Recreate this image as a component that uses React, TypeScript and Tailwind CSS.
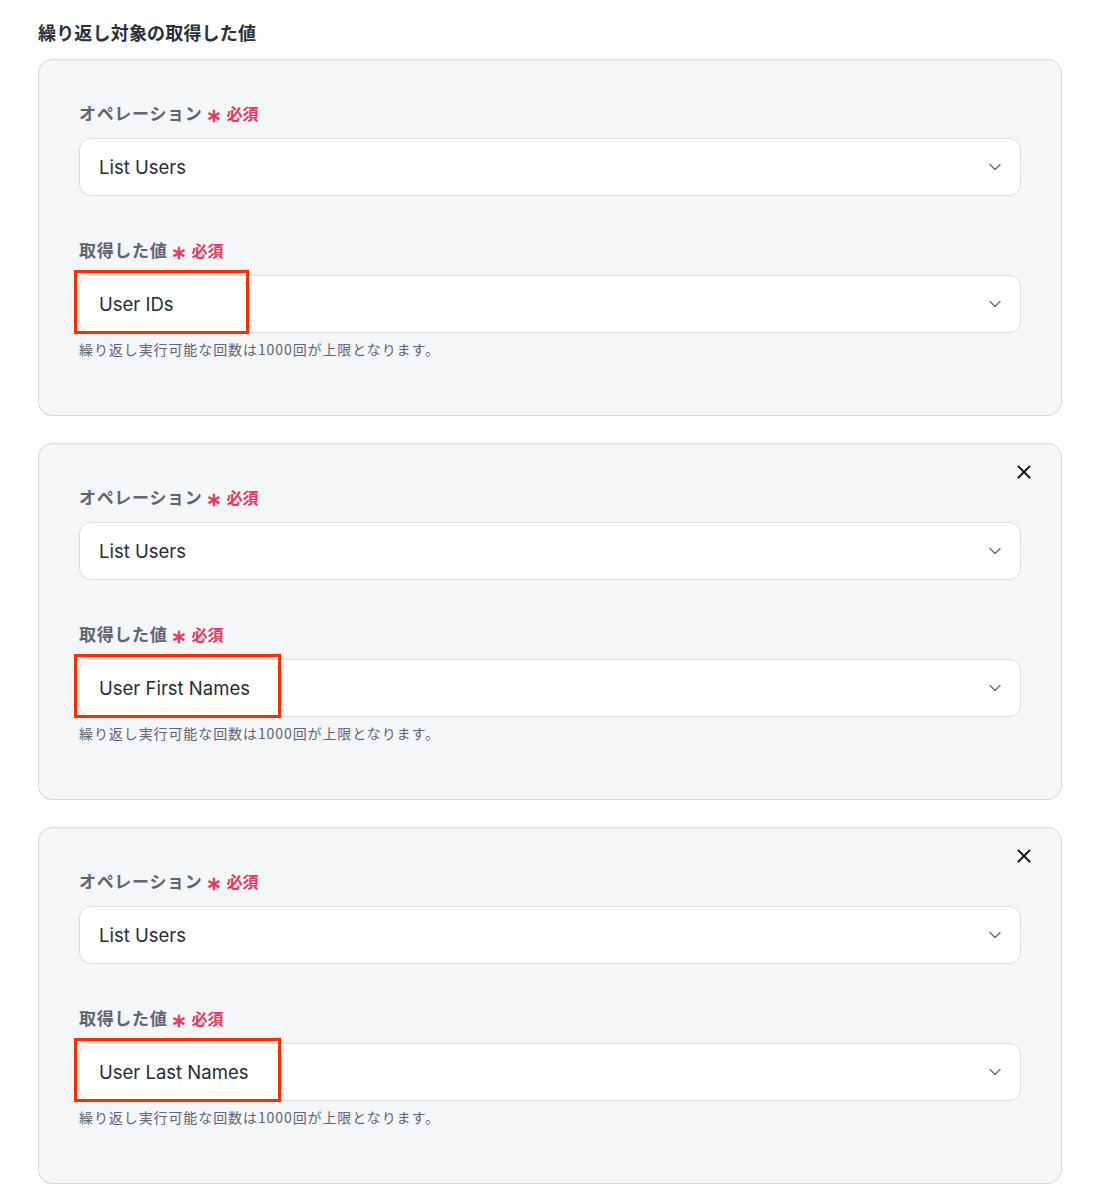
import { ChevronDown, X } from "lucide-react";

const font = { fontFamily: '"Noto Sans CJK JP", Inter, "Noto Sans", sans-serif' };

function Label({ text }: { text: string }) {
  return (
    <div className="flex h-6 items-center gap-1">
      <span className="text-[17px] font-semibold tracking-[0.04em] text-[#5f6570]">{text}</span>
      <span className="text-[19px] font-bold leading-none text-[#e8365d]">∗</span>
      <span className="text-[16px] font-semibold text-[#e8365d]">必須</span>
    </div>
  );
}

function Select({ value, highlight }: { value: string; highlight?: number }) {
  return (
    <div className="relative">
      <div className="flex h-[58px] items-center justify-between rounded-xl border border-[#d9dce1] bg-white pl-[19px] pr-[15px]">
        <span className="pt-[2px] text-[18.5px] text-[#262b33]" style={{ fontFamily: 'Inter, "Noto Sans CJK JP", sans-serif' }}>
          {value}
        </span>
        <ChevronDown size={20} strokeWidth={1.75} className="text-[#6b7280]" />
      </div>
      {highlight && (
        <div
          className="absolute left-[-5px] top-[-5px] h-[64px] border-[3.5px] border-[#ff2a00]"
          style={{ width: highlight }}
        />
      )}
    </div>
  );
}

function Card({ value, closable, hl }: { value: string; closable?: boolean; hl: number }) {
  return (
    <div className="relative rounded-[14px] border border-[#d3d7dd] bg-[#f5f6f8] px-10 pb-[56px] pt-[41px]">
      {closable && (
        <button className="absolute right-[26px] top-[17px] text-[#111]">
          <X size={22} strokeWidth={2} />
        </button>
      )}
      <Label text="オペレーション" />
      <div className="mt-[13px]">
        <Select value="List Users" />
      </div>
      <div className="mt-[42px]">
        <Label text="取得した値" />
      </div>
      <div className="mt-[13px]">
        <Select value={value} highlight={hl} />
      </div>
      <p className="mt-[6px] text-[14px] leading-5 tracking-[0.065em] text-[#5f6570]">
        繰り返し実行可能な回数は1000回が上限となります。
      </p>
    </div>
  );
}

export default function App() {
  return (
    <div className="min-h-[1196px] bg-white px-[38px] pt-[20px]" style={font}>
      <h2 className="mb-[15px] text-[18px] font-semibold leading-6 tracking-[0.01em] text-[#2a2f37]">
        繰り返し対象の取得した値
      </h2>
      <div className="flex w-[1024px] flex-col gap-[27px]">
        <Card value="User IDs" hl={175} />
        <Card value="User First Names" closable hl={207} />
        <Card value="User Last Names" closable hl={207} />
      </div>
    </div>
  );
}
